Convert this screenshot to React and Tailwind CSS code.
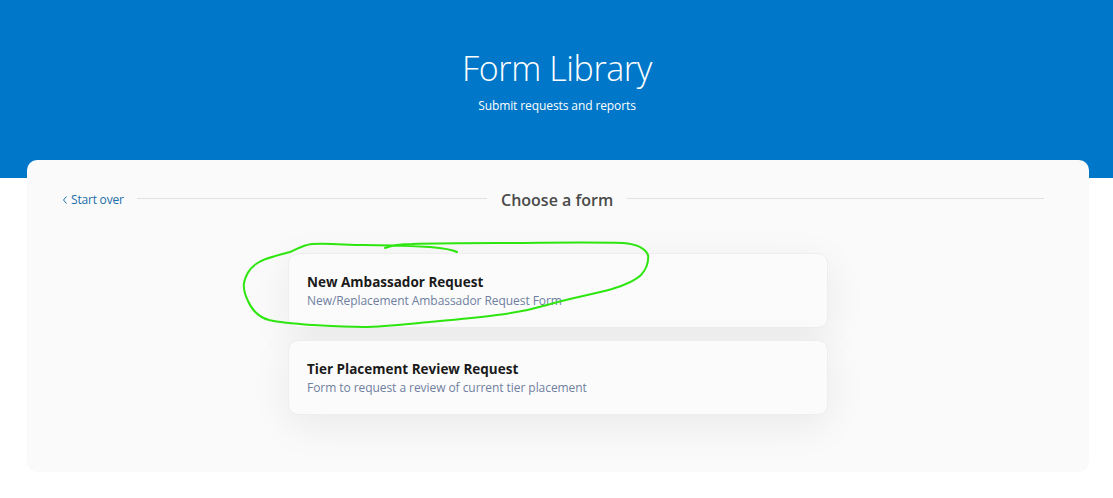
const FORMS = [
  { title: 'New Ambassador Request', desc: 'New/Replacement Ambassador Request Form' },
  { title: 'Tier Placement Review Request', desc: 'Form to request a review of current tier placement' },
];

// hand drawn green circle on top of the screenshot
function Scribble() {
  return (
    <svg className="absolute left-0 top-0 pointer-events-none" width="1113" height="498" fill="none">
      <path
        d="M385 248 C393 245 402 244 412 244 C440 243 470 243 497 243 C540 243 585 242 623 243 C636 244 645 248 648 255 C649 262 646 270 641 275 C635 281 625 285 612 289 C590 295 570 298 547 305 C530 310 515 313 497 315 C475 318 452 320 430 322 C408 324 385 327 363 327 C345 327 330 326 313 325 C298 324 282 323 269 320 C258 317 252 310 248 301 C245 295 243 290 244 283 C245 276 250 268 256 264 C262 259 272 257 290 252 C297 249 303 245 312 244 C330 243 347 245 363 245 C385 245 410 246 430 247 C442 248 451 249 457 252"
        stroke="#2ee60f"
        strokeWidth="2"
        strokeLinecap="round"
        strokeLinejoin="round"
      />
    </svg>
  );
}

function FormCard({ title, desc }) {
  return (
    <div className="h-[75px] rounded-[10px] border border-[#eeeeee] bg-[#fbfbfb] pl-[17px] pt-[19px] shadow-[0_10px_40px_rgba(0,0,0,0.07)]">
      <div className="text-[13.5px] leading-[19px] font-bold text-[#1a1a1a]">{title}</div>
      <div className="text-[12px] leading-[17px] tracking-[-0.06px] text-[#6f7f9f]">{desc}</div>
    </div>
  );
}

export default function App() {
  return (
    <div className="relative h-[498px] w-[1113px] overflow-hidden bg-white font-['Open_Sans','Noto_Sans',sans-serif]">
      {/* 헤더 */}
      <div className="h-[178px] bg-[#0077c8] pl-[1px] pt-[44px] text-center text-white">
        <h1 className="text-[34px] leading-[48px] font-light tracking-[-0.4px]">Form Library</h1>
        <p className="mt-[5px] text-[12px] leading-[18px] tracking-[-0.1px]">Submit requests and reports</p>
      </div>

      <div className="relative ml-[27px] mr-[24px] -mt-[18px] h-[312px] rounded-[10px] bg-[#fafafa] pl-[36px] pr-[45px] pt-[28px]">
        <div className="flex h-[22px] items-center">
          <a className="flex w-[74px] shrink-0 items-center pt-[1px] text-[12px] tracking-[-0.2px] text-[#1a6ea8]">
            <svg className="mr-[4px]" width="4" height="8" viewBox="0 0 4 8" fill="none">
              <path d="M3.5 0.5 L0.5 4 L3.5 7.5" stroke="#1a6ea8" strokeWidth="1" />
            </svg>
            Start over
          </a>
          <div className="-mt-[2px] h-px w-[350px] bg-[#e2e2e2]" />
          <span className="mt-[2px] px-[14px] text-[16px] font-semibold text-[#4a4a4a]">Choose a form</span>
          <div className="-mt-[2px] h-px flex-1 bg-[#e2e2e2]" />
        </div>

        <div className="ml-[225px] mt-[43px] flex w-[540px] flex-col gap-[12px] [&>div]:pl-[18px]">
          {FORMS.map((form) => (
            <FormCard key={form.title} title={form.title} desc={form.desc} />
          ))}
        </div>
      </div>

      <Scribble />
    </div>
  );
}
